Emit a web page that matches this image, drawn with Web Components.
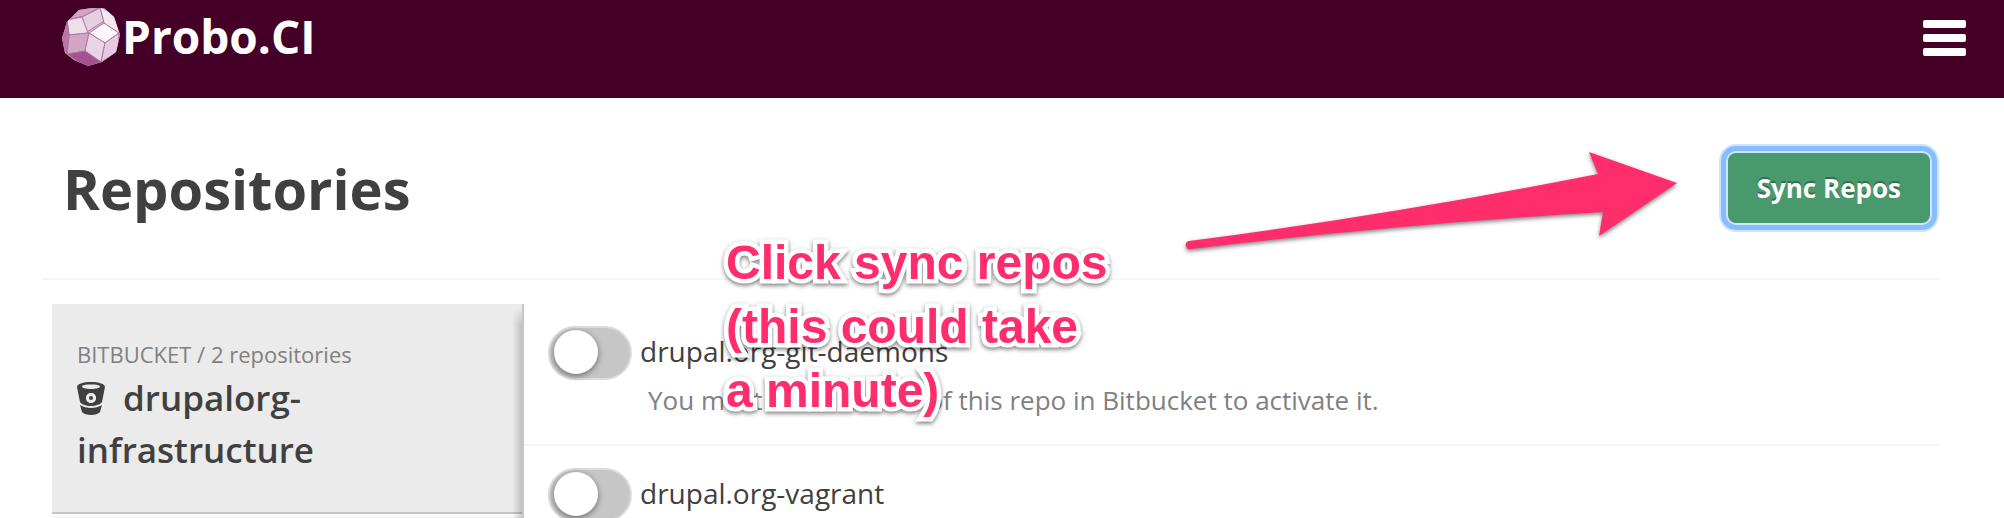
<!DOCTYPE html>
<html lang="en">
<head>
<meta charset="utf-8">
<title>Repositories - Probo.CI</title>
<style>
body { margin: 0; background: #fff; color: #404040; font-family: "Open Sans", "Noto Sans", sans-serif; }
</style>
</head>
<body>
<probo-page></probo-page>

<script>
const define = (name, html) => customElements.define(name, class extends HTMLElement {
  constructor() {
    super();
    const t = document.createElement('template');
    t.innerHTML = html;
    this.attachShadow({ mode: 'open' }).append(t.content.cloneNode(true));
  }
});

define('probo-logo', `
<style>
:host { display: block; }
a { display: flex; align-items: flex-start; gap: 2px; color: #fff; text-decoration: none; }
svg { display: block; width: 58px; height: 58px; }
span { font-size: 46px; line-height: 56px; font-weight: 700; }
</style>
<a href="#">
<svg viewBox="0 0 58 58" aria-hidden="true">
  <clipPath id="ball"><path d="M17 2 30 0H42L52 9 58 27 54 44 40 54 26 58 12 52 3 45 0 30 5 14Z"/></clipPath>
  <g clip-path="url(#ball)" stroke="#a9789d" stroke-width="1" stroke-linejoin="round">
    <path stroke="none" d="M0 0H58V58H0Z" fill="#dcbfd6"/>
    <path d="M5 12 17 1 38 -1 22 8Z" fill="#d3a4c7"/>
    <path d="M38 0 42 13 25 24 20 9Z" fill="#e6cfe0"/>
    <path d="M5 12 20 9 26 25 7 27Z" fill="#efdfeb"/>
    <path d="M38 -1 52 6 60 28 42 15Z" fill="#f3e7f1"/>
    <path d="M42 15 57 25 43 35 27 25Z" fill="#fcf7fb"/>
    <path d="M7 27 27 25 23 43 5 46Z" fill="#d0a5c6"/>
    <path d="M5 12 7 27 5 46 -2 36 -2 22Z" fill="#b777a8"/>
    <path d="M27 25 43 35 39 54 23 43Z" fill="#ead5e5"/>
    <path d="M57 25 56 44 39 54 43 35Z" fill="#e6cce0"/>
    <path d="M5 46 23 43 39 54 25 60Z" fill="#a6528e"/>
  </g>
</svg>
<span>Probo.CI</span>
</a>`);

define('menu-button', `
<style>
:host { display: block; }
button { display: grid; gap: 6px; width: 43px; padding: 0; border: 0; background: none; }
i { height: 8px; border-radius: 2px; background: #fff; }
</style>
<button type="button" aria-label="Menu"><i></i><i></i><i></i></button>`);

define('site-header', `
<style>
:host { display: flex; justify-content: space-between; align-items: flex-start; box-sizing: border-box; height: 98px; padding: 8px 38px 0 62px; background: #440027; }
menu-button { margin-top: 12px; }
</style>
<probo-logo></probo-logo>
<menu-button></menu-button>`);

define('sync-button', `
<style>
:host { display: block; }
button { display: block; padding: 17px 29px; border: 0; border-radius: 8px; background: #48996c; color: #fff; font: 700 26px/36px "Open Sans", sans-serif; text-shadow: 0 -2px 0 rgba(0,0,0,.3); box-shadow: 0 0 0 2px #cfe4ff, 0 0 0 7px #85bdff, 0 0 0 9px #cfe4ff; }
</style>
<button type="button"><slot></slot></button>`);

define('page-title', `
<style>
:host { display: flex; justify-content: space-between; align-items: center; box-sizing: border-box; height: 182px; padding: 0 10px 0 21px; border-bottom: 2px solid #f6f6f6; }
h1 { margin: 0; font-size: 56px; line-height: 76px; font-weight: 700; }
</style>
<h1><slot></slot></h1>
<slot name="action"></slot>`);

define('org-card', `
<style>
:host { display: block; padding: 34px 25px 36px; border-bottom: 2px solid #c6c6c6; background: #ebebeb; }
p { margin: 0 0 2px; color: #808080; font-size: 22px; line-height: 32px; }
h2 { margin: 0; width: 280px; font-size: 35px; line-height: 52px; font-weight: 600; }
svg { width: 28px; height: 33px; margin-right: 18px; vertical-align: -4px; }
</style>
<p><slot name="meta"></slot></p>
<h2><svg viewBox="0 0 28 33" aria-hidden="true">
<path fill="#404040" fill-rule="evenodd" d="M14 0C6 0 0 2 0 5L3 20C4 22 9 24 14 24S24 22 25 20L28 5C28 2 22 0 14 0ZM14 2.500C19 2.500 23 3 23 4.500S19 7 14 7 5 6 5 4.500 9 2.500 14 2.500ZM14 11A5 5 0 1 1 14 21 5 5 0 1 1 14 11Z"/>
<circle cx="14" cy="16" r="5" fill="#ebebeb"/>
<circle cx="14" cy="16" r="2" fill="#404040"/>
<path fill="#404040" d="M3 23C9 27 19 27 25 23L23 30C20 34 8 34 5 30Z"/>
</svg><slot></slot></h2>`);

define('repo-row', `
<style>
:host { display: block; box-sizing: border-box; padding: 22px 24px; border-bottom: 2px solid #f6f6f6; }
label { display: flex; align-items: flex-start; gap: 8px; font-size: 28px; line-height: 50px; }
input { appearance: none; box-sizing: border-box; flex: none; display: flex; width: 84px; height: 54px; margin: 0; padding: 2px 4px; border: 2px solid #dcdcdc; border-radius: 27px; background: #c6c6c6; }
input::before { content: ""; width: 44px; height: 44px; border-radius: 50%; background: #fff; box-shadow: 0 2px 6px rgba(0,0,0,.45); }
</style>
<label><input type="checkbox" role="switch"><span><slot></slot></span></label>
<slot name="note"></slot>`);

define('repo-note', `
<style>
:host { display: block; padding: 2px 0 4px 100px; color: #808080; font-size: 26px; line-height: 36px; }
</style><slot></slot>`);

define('call-out', `
<style>
:host { position: absolute; left: 726px; top: 231px; width: 420px; color: #ff2d6c; font: 700 48px/64px "Liberation Sans", Arial, sans-serif; -webkit-text-stroke: 9px #fff; paint-order: stroke fill; filter: drop-shadow(0 2px 2px rgba(0,0,0,.5)); pointer-events: none; }
</style><slot></slot>`);

define('call-arrow', `
<style>
:host { position: absolute; left: 1180px; top: 146px; filter: drop-shadow(0 2px 2px rgba(0,0,0,.5)); pointer-events: none; }
svg { display: block; }
</style>
<svg width="504" height="112" viewBox="0 0 504 112" aria-hidden="true">
<path fill="#ff2d6c" d="M9 95Q210 69 418 28L409 6 497 37 419 90 423 66Q220 78 11 103A4 4 0 0 1 9 95Z"/>
</svg>`);

define('probo-page', `
<style>
:host { display: block; position: relative; height: 100vh; overflow: hidden; }
main { padding: 0 64px 0 42px; }
.columns { display: grid; grid-template-columns: 472px 1fr; margin-top: 24px; padding-left: 10px; }
aside { position: relative; box-sizing: border-box; border-right: 2px solid #c6c6c6; }
aside::after { content: ""; position: absolute; top: 4px; right: 0; bottom: 0; width: 10px; background: linear-gradient(to left, rgba(0,0,0,.18), rgba(0,0,0,0)); mask-image: linear-gradient(transparent, #000 16px); }
.next { height: 40px; margin-top: 2px; border-top: 2px solid #f6f6f6; }
</style>
<site-header></site-header>
<main>
  <page-title>Repositories<sync-button slot="action">Sync Repos</sync-button></page-title>
  <div class="columns">
    <aside>
      <org-card><span slot="meta">BITBUCKET / 2 repositories</span>drupalorg-infrastructure</org-card>
      <div class="next"></div>
    </aside>
    <section>
      <repo-row>drupal.org-git-daemons<repo-note slot="note">You must be an admin of this repo in Bitbucket to activate it.</repo-note></repo-row>
      <repo-row>drupal.org-vagrant</repo-row>
    </section>
  </div>
</main>
<call-out>Click sync repos<br>(this could take<br>a minute)</call-out>
<call-arrow></call-arrow>`);
</script>
</body>
</html>
